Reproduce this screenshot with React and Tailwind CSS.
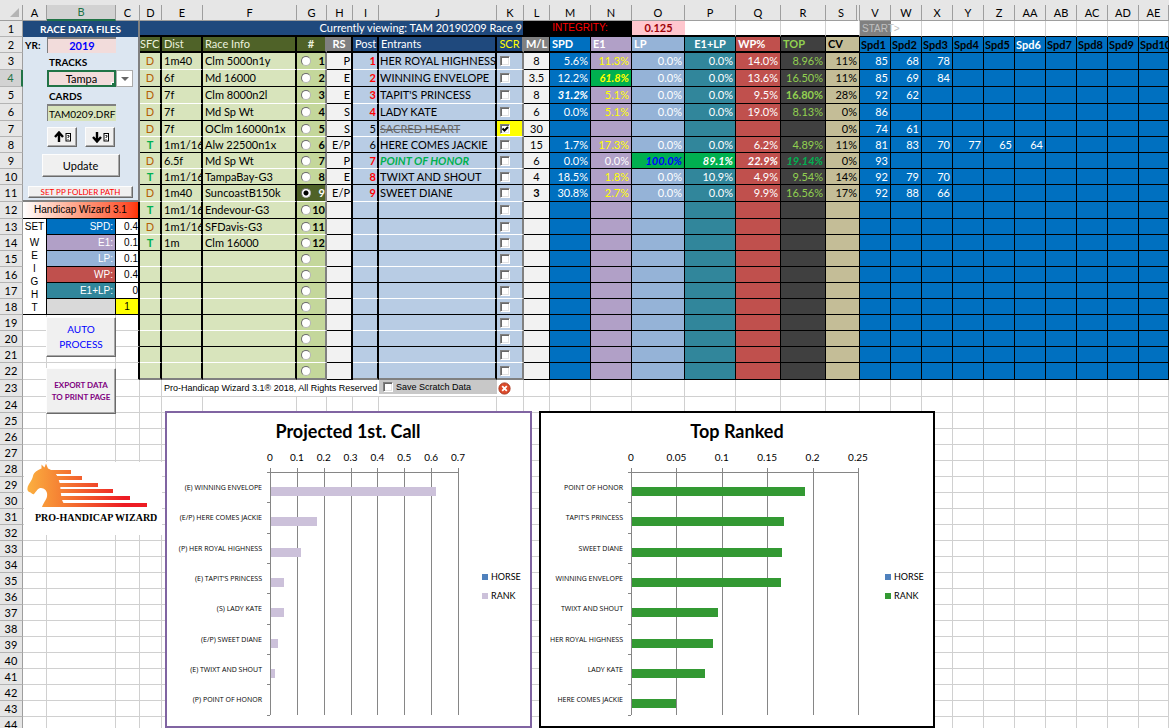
import { clsx } from "clsx";

const COLUMNS = [
  ["A", "w-[24px]"], ["B", "w-[69px]"], ["C", "w-[24px]"], ["D", "w-[22px]"], ["E", "w-[41px]"],
  ["F", "w-[94px]"], ["G", "w-[30px]"], ["H", "w-[26px]"], ["I", "w-[26px]"], ["J", "w-[118px]"],
  ["K", "w-[27px]"], ["L", "w-[26px]"], ["M", "w-[41px]"], ["N", "w-[41px]"], ["O", "w-[53px]"],
  ["P", "w-[51px]"], ["Q", "w-[45px]"], ["R", "w-[45px]"], ["S", "w-[34px]"], ["V", "w-[31px]"],
  ["W", "w-[31px]"], ["X", "w-[31px]"], ["Y", "w-[31px]"], ["Z", "w-[31px]"], ["AA", "w-[31px]"],
  ["AB", "w-[31px]"], ["AC", "w-[31px]"], ["AD", "w-[31px]"], ["AE", ""],
];

const RACES = {
  3: ["D", "1m40", "Clm 5000n1y"],
  4: ["D", "6f", "Md 16000"],
  5: ["D", "7f", "Clm 8000n2l"],
  6: ["D", "7f", "Md Sp Wt"],
  7: ["D", "7f", "OClm 16000n1x"],
  8: ["T", "1m1/16", "Alw 22500n1x"],
  9: ["D", "6.5f", "Md Sp Wt"],
  10: ["T", "1m1/16", "TampaBay-G3"],
  11: ["D", "1m40", "SuncoastB150k"],
  12: ["T", "1m1/16", "Endevour-G3"],
  13: ["D", "1m1/16", "SFDavis-G3"],
  14: ["T", "1m", "Clm 16000"],
};

const ENTRANTS = {
  3: { rs: "P", name: "HER ROYAL HIGHNESS", ml: "8", pct: ["5.6%", "11.3%", "0.0%", "0.0%", "14.0%", "8.96%", "11%"], spd: [85, 68, 78] },
  4: { rs: "E", name: "WINNING ENVELOPE", ml: "3.5", pct: ["12.2%", "61.8%", "0.0%", "0.0%", "13.6%", "16.50%", "11%"], spd: [85, 69, 84] },
  5: { rs: "E", name: "TAPIT'S PRINCESS", ml: "8", pct: ["31.2%", "5.1%", "0.0%", "0.0%", "9.5%", "16.80%", "28%"], spd: [92, 62] },
  6: { rs: "S", name: "LADY KATE", ml: "6", pct: ["0.0%", "5.1%", "0.0%", "0.0%", "19.0%", "8.13%", "0%"], spd: [86] },
  7: { rs: "S", name: "SACRED HEART", ml: "30", pct: ["", "", "", "", "", "", "0%"], spd: [74, 61] },
  8: { rs: "E/P", name: "HERE COMES JACKIE", ml: "15", pct: ["1.7%", "17.3%", "0.0%", "0.0%", "6.2%", "4.89%", "11%"], spd: [81, 83, 70, 77, 65, 64] },
  9: { rs: "P", name: "POINT OF HONOR", ml: "6", pct: ["0.0%", "0.0%", "100.0%", "89.1%", "22.9%", "19.14%", "0%"], spd: [93] },
  10: { rs: "E", name: "TWIXT AND SHOUT", ml: "4", pct: ["18.5%", "1.8%", "0.0%", "10.9%", "4.9%", "9.54%", "14%"], spd: [92, 79, 70] },
  11: { rs: "E/P", name: "SWEET DIANE", ml: "3", pct: ["30.8%", "2.7%", "0.0%", "0.0%", "9.9%", "16.56%", "17%"], spd: [92, 88, 66] },
};

const PCT_STYLES = [
  "bg-[#0070c0] text-white",
  "bg-[#b1a0c7] text-[#ffff00]",
  "bg-[#95b3d7] text-white",
  "bg-[#31869b] text-white",
  "bg-[#c0504d] text-white",
  "bg-[#404040] text-[#92d050]",
  "bg-[#c4bd97] text-black",
];

const HIGHLIGHTS = {
  "4-1": "bg-[#00b050] text-[#ffff00] font-bold italic",
  "5-0": "bg-[#0070c0] text-white font-bold italic",
  "5-5": "bg-[#404040] text-[#92d050] font-bold",
  "9-1": "bg-[#b1a0c7] text-white",
  "9-2": "bg-[#00b050] text-[#0000ff] font-bold italic",
  "9-3": "bg-[#00b050] text-white font-bold italic",
  "9-4": "bg-[#c0504d] text-white font-bold italic",
  "9-5": "bg-[#404040] text-[#00b050] font-bold italic",
};

const TALL_ROWS = [3, 4, 5, 6, 11, 12, 22, 23];
const ROWS = Array.from({ length: 44 }, (_, i) => i + 1);

const WEIGHTS = {
  13: ["SPD:", "0.4", "bg-[#0070c0]", "bg-white"],
  14: ["E1:", "0.1", "bg-[#b1a0c7]", "bg-white"],
  15: ["LP:", "0.1", "bg-[#95b3d7]", "bg-white"],
  16: ["WP:", "0.4", "bg-[#c0504d]", "bg-white"],
  17: ["E1+LP:", "0", "bg-[#31869b]", "bg-white"],
  18: ["", "1", "bg-[#d9d9d9]", "bg-[#ffff00]"],
};

const HEADINGS = [
  ["SFC", "bg-[#4f6228] text-[#ebf1de] border-r-2"],
  ["Dist", "bg-[#4f6228] text-[#ebf1de] border-r-2 pl-[2px]"],
  ["Race Info", "bg-[#4f6228] text-[#ebf1de] border-r-2 pl-[2px]"],
  ["#", "bg-[#4f6228] text-[#ebf1de] border-r-2 border-r-[#808080] text-center font-bold"],
  ["RS", "bg-[#808080] text-white border-r-2 text-center font-bold"],
  ["Post", "bg-[#1f497d] text-white border-r-2 pl-[2px]"],
  ["Entrants", "bg-[#1f497d] text-white border-r-2 pl-[2px]"],
  ["SCR", "bg-[#1f497d] text-[#ffff00] border-r-2 border-r-[#808080] text-center"],
  ["M/L", "bg-[#808080] text-white border-r text-center font-bold"],
  ["SPD", "bg-[#0070c0] text-white border-r pl-[2px] font-bold"],
  ["E1", "bg-[#b1a0c7] text-white border-r pl-[2px] font-bold"],
  ["LP", "bg-[#95b3d7] text-white border-r pl-[2px] font-bold"],
  ["E1+LP", "bg-[#31869b] text-white border-r text-center font-bold"],
  ["WP%", "bg-[#c0504d] text-white border-r pl-[2px] font-bold"],
  ["TOP", "bg-[#404040] text-[#92d050] border-r pl-[2px] font-bold"],
  ["CV", "bg-[#c4bd97] text-black border-r pl-[2px] font-bold"],
];

const BEVEL =
  "bg-[#f0f0f0] border border-t-[#fdfdfd] border-l-[#fdfdfd] border-r-[#6a6a6a] border-b-[#6a6a6a] shadow-[inset_-1px_-1px_0_#a8a8a8]";

const SANS = "font-['Liberation_Sans',sans-serif] text-[10px]";

function Cell({ className, children, ...rest }) {
  return (
    <td className={clsx("overflow-hidden whitespace-nowrap p-0", className)} {...rest}>
      {children}
    </td>
  );
}

function PlainCell({ className }) {
  return <td className={clsx("border-r border-b border-[#d0d0d0] p-0", className)} />;
}

function Tick({ label, checked }) {
  return (
    <span className="relative block size-[10px]">
      <input
        type="checkbox"
        aria-label={label}
        defaultChecked={checked}
        className="peer block size-[10px] appearance-none border border-t-[#808080] border-l-[#808080] border-r-white border-b-white bg-white shadow-[inset_1px_1px_0_#696969,inset_-1px_-1px_0_#e3e3e3]"
      />
      <svg viewBox="0 0 10 10" className="pointer-events-none absolute inset-0 hidden size-[10px] peer-checked:block">
        <path d="M2.5 4.5 L4.5 6.5 L8 3" fill="none" stroke="#000" strokeWidth="2" />
      </svg>
    </span>
  );
}

function ArrowIcon({ down }) {
  return (
    <svg viewBox="0 0 18 12" className="h-[12px] w-[18px]">
      <path
        d={down ? "M5 1 V10 M1 6 L5 10.5 L9 6" : "M5 11 V2 M1 6 L5 1.5 L9 6"}
        fill="none"
        stroke="#000"
        strokeWidth="2.4"
      />
      <rect x="12" y="2.5" width="4.5" height="7.5" fill="#fff" stroke="#000" />
      <path d="M13.3 4.5 H15 V6 H14 V7 M14 8 V9" fill="none" stroke="#000" strokeWidth="0.8" />
    </svg>
  );
}

function LeftPanel({ row }) {
  const blue = "bg-[#dce6f1]";
  if (row === 1)
    return (
      <Cell colSpan={3} className="border-r-2 border-[#808080] bg-[#1f497d] text-center text-[10px] font-bold text-white">
        RACE DATA FILES
      </Cell>
    );
  if (row === 2)
    return (
      <>
        <Cell className={clsx(blue, "pl-[2px] text-[10px] font-bold")}>YR:</Cell>
        <Cell className="border-t-2 border-l border-[#808080] bg-[#f2dcdb] text-center font-bold text-[#0000ff]">2019</Cell>
        <Cell className={clsx(blue, "border-r-2 border-[#808080]")} />
      </>
    );
  if (row === 3 || row === 5)
    return (
      <>
        <Cell className={blue} />
        <Cell className={clsx(blue, "pl-[2px] text-[10px] font-bold")}>{row === 3 ? "TRACKS" : "CARDS"}</Cell>
        <Cell className={clsx(blue, "border-r-2 border-[#808080]")} />
      </>
    );
  if (row === 4)
    return (
      <>
        <Cell className={blue} />
        <Cell className="border-2 border-[#217346] bg-[#f2dcdb]">
          <div className="relative">
            <select aria-label="Track" className="block h-[13px] w-full appearance-none bg-transparent p-0 text-center leading-[13px]">
              <option>Tampa</option>
            </select>
            <span className="absolute right-0 bottom-0 size-[3px] border-t border-l border-white bg-[#217346]" />
          </div>
        </Cell>
        <Cell className={clsx(blue, "border-r-2 border-[#808080]")}>
          <button aria-label="Show tracks" className="flex h-[17px] w-[17px] items-center justify-center border border-[#ababab] bg-white">
            <svg viewBox="0 0 8 4" className="h-[4px] w-[8px]">
              <path d="M0 0 H8 L4 4 Z" fill="#666" />
            </svg>
          </button>
        </Cell>
      </>
    );
  if (row === 6)
    return (
      <>
        <Cell className={blue} />
        <Cell className="border-t-2 border-l border-[#808080] bg-[#d8e4bc] pl-[1px] text-[10px]">TAM0209.DRF</Cell>
        <Cell className={clsx(blue, "border-r-2 border-[#808080]")} />
      </>
    );
  if (row === 7)
    return (
      <Cell colSpan={3} rowSpan={5} className={clsx(blue, "border-r-2 border-b-2 border-[#808080] align-top")}>
        <div className="flex flex-col items-center pt-[6px]">
          <div className="flex gap-[8px]">
            <button aria-label="Move up" className={clsx(BEVEL, "flex h-[20px] w-[30px] items-center justify-end pr-[4px]")}>
              <ArrowIcon />
            </button>
            <button aria-label="Move down" className={clsx(BEVEL, "flex h-[20px] w-[30px] items-center justify-end pr-[4px]")}>
              <ArrowIcon down />
            </button>
          </div>
          <button className={clsx(BEVEL, "mt-[7px] h-[23px] w-[78px]")}>Update</button>
          <button className={clsx(BEVEL, "mt-[9px] h-[12px] w-[105px] text-[8px] leading-[9px] text-[#ff0000]")}>
            SET PP FOLDER PATH
          </button>
        </div>
      </Cell>
    );
  if (row > 7 && row < 12) return null;
  if (row === 12)
    return (
      <Cell
        colSpan={3}
        className={clsx("border-r-2 border-b border-black bg-linear-to-r from-white via-[#ff9d80] to-[#ff3300] text-center", SANS)}
      >
        Handicap Wizard 3.1
      </Cell>
    );
  if (row < 19) {
    const [label, value, tone, valueTone] = WEIGHTS[row];
    return (
      <>
        {row === 13 && <Cell className={clsx("border-r border-black bg-white text-center", SANS)}>SET</Cell>}
        {row === 14 && (
          <Cell rowSpan={5} className={clsx("border-r border-b border-black bg-white", SANS)}>
            <div className="flex flex-col items-center leading-[13px]">
              {"WEIGHT".split("").map((letter) => (
                <span key={letter}>{letter}</span>
              ))}
            </div>
          </Cell>
        )}
        <Cell className={clsx("border-r border-b border-black pr-[2px] text-right text-white", SANS, tone)}>{label}</Cell>
        <Cell className={clsx("border-r-2 border-b border-black", SANS, row === 18 ? "text-center" : "text-right", valueTone)}>
          {value}
        </Cell>
      </>
    );
  }
  return (
    <>
      <PlainCell />
      <PlainCell />
      {row < 23 ? <Cell className="border-r-2 border-b border-r-black border-b-[#d0d0d0]" /> : <PlainCell />}
    </>
  );
}

function BodyRow({ row }) {
  const race = RACES[row] ?? ["", "", ""];
  const entrant = ENTRANTS[row];
  const last = row === 22;
  const line = last ? "border-b-2 border-b-[#808080]" : row % 2 ? "border-b border-b-white" : "border-b border-b-black";
  const ruled = "border-b border-b-black";
  const green = clsx("border-r-2 border-r-black bg-[#d8e4bc]", line);
  const current = row === 11;
  const scratched = row === 7;
  return (
    <>
      <Cell className={clsx(green, "text-center", race[0] === "T" ? "font-bold text-[#00b050]" : "text-[#b45f06]")}>{race[0]}</Cell>
      <Cell className={clsx(green, "pl-[2px]")}>{race[1]}</Cell>
      <Cell className={clsx(green, "pl-[2px]")}>{race[2]}</Cell>
      <Cell className={clsx("border-r-2 border-r-[#808080]", line, current ? "bg-[#4f6228] text-white" : "bg-[#c4d79b]")}>
        <label className="flex items-center justify-between pl-[4px] font-bold">
          <input
            type="radio"
            name="race"
            aria-label={`Race ${row - 2}`}
            defaultChecked={current}
            className="block size-[10px] shrink-0 appearance-none rounded-full border border-t-[#6b6b6b] border-l-[#6b6b6b] border-r-[#b5b5b5] border-b-[#b5b5b5] bg-white checked:bg-[radial-gradient(circle,#000_0_2px,#fff_3px)]"
          />
          {row < 15 && <span>{row - 2}</span>}
        </label>
      </Cell>
      <Cell className={clsx("border-r-2 border-r-black bg-[#f2f2f2] pr-[1px] text-right", ruled)}>{entrant?.rs}</Cell>
      <Cell
        className={clsx(
          "border-r-2 border-r-black bg-[#b8cce4] pr-[1px] text-right",
          line,
          row !== 7 && row !== 8 && "font-bold text-[#ff0000]",
        )}
      >
        {entrant && row - 2}
      </Cell>
      <Cell
        className={clsx(
          "border-r-2 border-r-black bg-[#b8cce4] pl-[1px]",
          line,
          scratched && "text-[#666666] line-through",
          row === 9 && "font-bold text-[#00b050] italic",
        )}
      >
        {entrant?.name}
      </Cell>
      <Cell className={clsx("border-r-2 border-r-[#808080] pl-[3px]", line, scratched ? "bg-[#ffff00]" : "bg-[#b8cce4]")}>
        <Tick label={`Scratch post ${row - 2}`} checked={scratched} />
      </Cell>
      <Cell className={clsx("border-r border-r-black bg-[#f2f2f2] text-center", ruled, current && "font-bold")}>{entrant?.ml}</Cell>
      {PCT_STYLES.map((tone, i) => (
        <Cell key={i} className={clsx("border-r border-r-black pr-[2px] text-right", ruled, HIGHLIGHTS[`${row}-${i}`] ?? tone)}>
          {entrant?.pct[i]}
        </Cell>
      ))}
      {Array.from({ length: 10 }, (_, i) => (
        <Cell key={i} className={clsx("border-r border-r-black bg-[#0070c0] pr-[2px] text-right text-white", ruled)}>
          {entrant?.spd[i]}
        </Cell>
      ))}
    </>
  );
}

function GridRow({ row }) {
  if (row === 1)
    return (
      <>
        <Cell colSpan={8} className="border-r border-b-2 border-black bg-[#1f497d] pr-[1px] text-right text-white">
          Currently viewing: TAM 20190209 Race 9
        </Cell>
        <Cell colSpan={3} className={clsx("border-b-2 border-black bg-black pl-[4px] text-center text-[#ff0000]", SANS)}>
          INTEGRITY:
        </Cell>
        <Cell className="border-b-2 border-black bg-[#ffc7ce] text-center font-bold text-[#9c0006]">0.125</Cell>
        {["P", "Q", "R", "S"].map((c) => (
          <Cell key={c} className="border-r border-b-2 border-r-[#d0d0d0] border-b-black" />
        ))}
        <td className={clsx("border-b border-black bg-[#808080] p-0 pl-[2px] whitespace-nowrap text-[#c0c0c0]", SANS)}>
          START&gt;
        </td>
        {Array.from({ length: 9 }, (_, i) => (
          <Cell key={i} className="border-r border-b border-r-[#d0d0d0] border-b-black" />
        ))}
      </>
    );
  if (row === 2)
    return (
      <>
        {HEADINGS.map(([text, tone]) => (
          <Cell key={text} className={clsx("border-b-2 border-black", tone)}>
            {text}
          </Cell>
        ))}
        {Array.from({ length: 10 }, (_, i) => (
          <Cell
            key={i}
            className={clsx("border-r border-b border-black bg-[#0070c0] pl-[1px] font-bold", i === 5 ? "text-white" : "text-black")}
          >
            Spd{i + 1}
          </Cell>
        ))}
      </>
    );
  if (row < 23) return <BodyRow row={row} />;
  if (row === 23)
    return (
      <>
        <PlainCell />
        <Cell colSpan={5} className="border-b border-[#d0d0d0] pl-[2px] font-['Liberation_Sans',sans-serif] text-[9px]">
          Pro-Handicap Wizard 3.1® 2018, All Rights Reserved
        </Cell>
        <Cell className="border-b border-[#d0d0d0] align-top font-['Liberation_Sans',sans-serif] text-[9px]">
          <label className="flex h-[14px] items-center gap-[3px] bg-[#c8c8c8] pl-[4px]">
            <Tick label="Save Scratch Data" />
            Save Scratch Data
          </label>
        </Cell>
        <Cell className="border-r border-b border-[#d0d0d0]">
          <button aria-label="Cancel" className="block pl-[1px]">
            <svg viewBox="0 0 13 13" className="block size-[13px]">
              <circle cx="6.5" cy="6.5" r="5.6" fill="#dd4b2b" stroke="#a8371f" />
              <path d="M4.2 4.2 L8.8 8.8 M8.8 4.2 L4.2 8.8" stroke="#fff" strokeWidth="1.8" />
            </svg>
          </button>
        </Cell>
        {Array.from({ length: 18 }, (_, i) => (
          <PlainCell key={i} />
        ))}
      </>
    );
  return COLUMNS.slice(3).map(([name]) => <PlainCell key={name} />);
}

function BarChart({ title, width, origin, step, ticks, per, bars, color, legendX, titleX }) {
  const pitch = 30.33;
  const top = 59;
  return (
    <svg viewBox={`0 0 ${width} 313`} width={width} height="313" className="block" role="img" aria-label={title}>
      <text x={titleX} y="25" textAnchor="middle" fontSize="18" fontWeight="700">
        {title}
      </text>
      {ticks.map((tick, i) => (
        <g key={tick}>
          <text x={origin + i * step} y="48" textAnchor="middle" fontSize="10">
            {tick}
          </text>
          <rect x={Math.round(origin + i * step)} y={top - 4} width="1" height="247" fill="#868686" />
        </g>
      ))}
      <rect x={origin - 3} y={top} width={Math.round((ticks.length - 1) * step) + 3} height="1" fill="#868686" />
      {bars.map(([label, value], i) => (
        <g key={label}>
          <text
            x={origin - 8}
            y={Math.round(top + i * pitch) + 18}
            textAnchor="end"
            fontSize="7"
            className="font-['Open_Sans',sans-serif]"
          >
            {label}
          </text>
          <rect x={origin + 1} y={Math.round(top + i * pitch + 15)} width={Math.floor((value / per) * step)} height="9" fill={color} />
          <rect x={origin - 3} y={Math.round(top + (i + 1) * pitch)} width="3" height="1" fill="#868686" />
        </g>
      ))}
      <rect x={legendX} y="161" width="6" height="6" fill="#4f81bd" />
      <text x={legendX + 9} y="167" fontSize="9">
        HORSE
      </text>
      <rect x={legendX} y="180" width="6" height="6" fill={color} />
      <text x={legendX + 9} y="186" fontSize="9">
        RANK
      </text>
    </svg>
  );
}

function Logo() {
  const stripes = [
    [28, 15, 47], [34, 21, 58], [38, 28, 74], [40, 34, 89], [42, 41, 106], [44, 48, 123],
  ];
  return (
    <svg viewBox="0 0 138 73" width="138" height="73" className="block bg-white" role="img" aria-label="Pro-Handicap Wizard">
      <defs>
        <linearGradient id="stripe" gradientUnits="userSpaceOnUse" x1="3" y1="0" x2="100" y2="0">
          <stop offset="0" stopColor="#fbb040" />
          <stop offset="0.35" stopColor="#f58033" />
          <stop offset="1" stopColor="#ed1c24" />
        </linearGradient>
      </defs>
      <g fill="url(#stripe)" transform="translate(0 -7)">
        {stripes.map(([x, y, end]) => (
          <rect key={y} x={x - 8} y={y} width={end - x + 8} height="4" />
        ))}
        <path d="M3.5 33 C4 29 8 26 9 21 C10 17 14 15 17.5 13.5 L17.5 9.5 L20.5 12.5 L22 8.5 L24 13.5 C30 16 34 20 35 26 C37 31 36 34 37 39 C37.5 46 40 50 44 52 L18 52 C20 46 24 44 23 38 C22 34 19 33 16 33 C13 34 12 37 10 39 C8 40 7 37 5 37 C4 36 3 35 3.5 33 Z" />
      </g>
      <text x="11" y="59" fontSize="10" fontWeight="700" className="font-['Liberation_Serif',serif]" fill="#000">
        PRO-HANDICAP WIZARD
      </text>
    </svg>
  );
}

export default function App() {
  return (
    <main className="relative h-screen w-full overflow-hidden bg-white font-[Lato,'Liberation_Sans',sans-serif] text-[11px] leading-[14px] text-black">
      <div className="h-[5px] bg-[#e6e6e6]" />
      <table className="w-full table-fixed border-separate border-spacing-0">
        <colgroup>
          <col className="w-[23px]" />
          {COLUMNS.map(([name, width]) => (
            <col key={name} className={width} />
          ))}
        </colgroup>
        <thead>
          <tr className="h-[16px] bg-[#e6e6e6] text-[11px]">
            <th className="border-r border-b border-[#9e9e9e] p-0">
              <svg viewBox="0 0 9 9" className="ml-auto mr-[3px] block size-[9px]">
                <path d="M9 0 V9 H0 Z" fill="#b4b4b4" />
              </svg>
            </th>
            {COLUMNS.map(([name]) => (
              <th
                key={name}
                scope="col"
                className={clsx(
                  "p-0 font-normal",
                  name === "B"
                    ? "border-r border-b-2 border-r-[#9e9e9e] border-b-[#217346] bg-[#d2d2d2] text-[#217346]"
                    : "border-b border-[#9e9e9e]",
                  name === "S" ? "border-r-4 [border-right-style:double]" : "border-r",
                )}
              >
                {name}
              </th>
            ))}
          </tr>
        </thead>
        <tbody>
          {ROWS.map((row) => (
            <tr key={row} className={TALL_ROWS.includes(row) ? "h-[17px]" : "h-[16px]"}>
              <th
                scope="row"
                className={clsx(
                  "border-b border-b-[#b4b4b4] p-0 font-normal",
                  row === 4 ? "border-r-2 border-r-[#217346] bg-[#d2d2d2] text-[#217346]" : "border-r border-r-[#9e9e9e] bg-[#e6e6e6]",
                )}
              >
                {row}
              </th>
              <LeftPanel row={row} />
              <GridRow row={row} />
            </tr>
          ))}
        </tbody>
      </table>

      <button className={clsx(BEVEL, "absolute top-[317px] left-[46px] h-[40px] w-[70px] text-[10px] leading-[15px] text-[#0000ff]")}>
        AUTO
        <br />
        PROCESS
      </button>
      <button className={clsx(BEVEL, "absolute top-[368px] left-[46px] h-[46px] w-[70px] text-[8px] leading-[12px] font-bold text-[#800080]")}>
        EXPORT DATA
        <br />
        TO PRINT PAGE
      </button>
      <div className="absolute top-[462px] left-[24px]">
        <Logo />
      </div>
      <section className="absolute top-[411px] left-[165px] border-2 border-[#8064a2] bg-white">
        <BarChart
          title="Projected 1st. Call"
          width={363}
          titleX={181}
          origin={103}
          step={26.86}
          per={0.1}
          ticks={["0", "0.1", "0.2", "0.3", "0.4", "0.5", "0.6", "0.7"]}
          color="#ccc1da"
          legendX={315}
          bars={[
            ["(E) WINNING ENVELOPE", 0.618],
            ["(E/P) HERE COMES JACKIE", 0.173],
            ["(P) HER ROYAL HIGHNESS", 0.113],
            ["(E) TAPIT'S PRINCESS", 0.051],
            ["(S) LADY KATE", 0.051],
            ["(E/P) SWEET DIANE", 0.027],
            ["(E) TWIXT AND SHOUT", 0.018],
            ["(P) POINT OF HONOR", 0],
          ]}
        />
      </section>
      <section className="absolute top-[411px] left-[539px] border-2 border-black bg-white">
        <BarChart
          title="Top Ranked"
          width={392}
          titleX={196}
          origin={90}
          step={45.4}
          per={0.05}
          ticks={["0", "0.05", "0.1", "0.15", "0.2", "0.25"]}
          color="#339933"
          legendX={344}
          bars={[
            ["POINT OF HONOR", 0.1914],
            ["TAPIT'S PRINCESS", 0.168],
            ["SWEET DIANE", 0.1656],
            ["WINNING ENVELOPE", 0.165],
            ["TWIXT AND SHOUT", 0.0954],
            ["HER ROYAL HIGHNESS", 0.0896],
            ["LADY KATE", 0.0813],
            ["HERE COMES JACKIE", 0.0489],
          ]}
        />
      </section>
    </main>
  );
}
